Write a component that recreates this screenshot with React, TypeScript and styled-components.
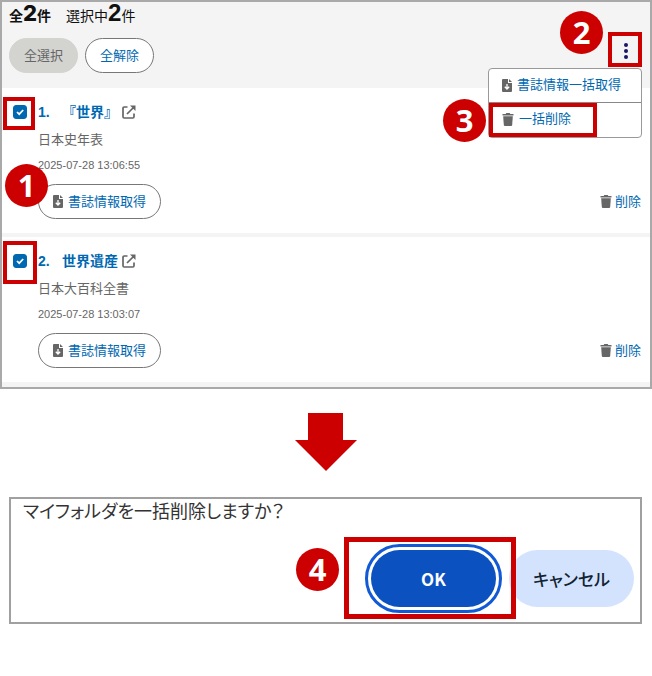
import React from "react";
import styled, { createGlobalStyle } from "styled-components";

const GlobalStyle = createGlobalStyle`
  *, *::before, *::after { box-sizing: border-box; }
  body {
    margin: 0;
    background: #fff;
    color: #666;
    font-family: "Liberation Sans", "Noto Sans CJK JP", sans-serif;
    font-size: 13px;
    line-height: 20px;
  }
  button, input { font: inherit; margin: 0; }
  h2, p, ul { margin: 0; padding: 0; }
`;

const BLUE = "#0068b1";
const RED = "#cc0000";

const Page = styled.main`
  display: flex;
  flex-direction: column;
`;

const FolderPanel = styled.section`
  padding-bottom: 1px;
  border: 2px solid #a9a9a9;
  background: #f4f4f4;
`;

const FolderHeader = styled.header`
  position: relative;
  display: flex;
  flex-direction: column;
  gap: 10px;
  padding: 0 8px 15px 7px;
  background: #f4f4f4;
`;

const Counts = styled.p`
  display: flex;
  align-items: baseline;
  gap: 15px;
  height: 26px;
  color: #111;
  font-size: 14px;
  line-height: 26px;
`;

const Count = styled.span<{ $bold?: boolean }>`
  font-weight: ${(p) => (p.$bold ? 700 : 400)};
`;

const CountNumber = styled.strong<{ $heavy?: boolean }>`
  font-size: ${(p) => (p.$heavy ? 22 : 24)}px;
  line-height: 22px;
  font-weight: ${(p) => (p.$heavy ? 800 : 700)};
  ${(p) => p.$heavy && "font-family: Inter, sans-serif;"}
`;

const Toolbar = styled.div`
  display: flex;
  align-items: center;
  gap: 7px;
`;

const PillButton = styled.button<{ $muted?: boolean }>`
  display: inline-flex;
  align-items: center;
  gap: 5px;
  height: 35px;
  padding: 0 14px;
  border: 1px solid ${(p) => (p.$muted ? "#d3d3d0" : "#777")};
  border-radius: 18px;
  background: ${(p) => (p.$muted ? "#d3d3d0" : "#fff")};
  color: ${(p) => (p.$muted ? "#666" : BLUE)};
  white-space: nowrap;
`;

const MenuAnchor = styled.div`
  position: absolute;
  top: 30px;
  right: 8px;
  z-index: 2;
`;

const KebabButton = styled.button`
  display: grid;
  place-items: center;
  width: 34px;
  height: 35px;
  margin-left: auto;
  padding: 2px 0 0 2px;
  border: 0;
  background: transparent;
`;

const Menu = styled.ul`
  width: 154px;
  margin-top: 1px;
  padding-bottom: 1px;
  border: 1px solid #999;
  border-radius: 4px;
  background: #fff;
  list-style: none;
`;

const MenuItem = styled.li`
  position: relative;
  & + & { border-top: 1px solid #888; }
`;

const MenuButton = styled.button`
  display: flex;
  align-items: center;
  gap: 5px;
  width: 100%;
  height: 33px;
  padding: 0 13px 1px;
  border: 0;
  background: transparent;
  color: ${BLUE};
  white-space: nowrap;
`;

const Highlight = styled.span<{ $top: number; $left: number; $w: number; $h: number; $line?: number }>`
  position: absolute;
  top: ${(p) => p.$top}px;
  left: ${(p) => p.$left}px;
  width: ${(p) => p.$w}px;
  height: ${(p) => p.$h}px;
  border: ${(p) => p.$line ?? 4}px solid ${RED};
  pointer-events: none;
`;

const Badge = styled.span<{ $top: number; $left: number }>`
  position: absolute;
  z-index: 3;
  top: ${(p) => p.$top}px;
  left: ${(p) => p.$left}px;
  display: grid;
  place-items: center;
  width: 43px;
  height: 43px;
  padding-bottom: 2px;
  border-radius: 50%;
  background: ${RED};
  color: #fff;
  font: 700 31px/40px "Noto Sans", sans-serif;
  pointer-events: none;
`;

const Entry = styled.article`
  position: relative;
  display: grid;
  grid-template-columns: 14px 1fr;
  column-gap: 11px;
  padding: 14px 9px 14px 11px;
  border-bottom: 4px solid #f4f4f4;
  background: #fff;
`;

const CheckLabel = styled.label`
  display: grid;
  align-content: center;
  height: 20px;

  svg {
    grid-area: 1 / 1;
    place-self: center;
    pointer-events: none;
  }
`;

const CheckInput = styled.input`
  grid-area: 1 / 1;
  appearance: none;
  width: 14px;
  height: 14px;
  border: 1px solid ${BLUE};
  border-radius: 3px;
  background: #fff;

  &:checked { background: ${BLUE}; }
`;

const EntryBody = styled.div`
  display: flex;
  flex-direction: column;
`;

const EntryTitle = styled.h2`
  display: flex;
  align-items: center;
  color: ${BLUE};
  font-size: 14px;
  line-height: 20px;
`;

const EntryNumber = styled.span`
  width: 24px;
`;

const TitleLink = styled.a`
  display: flex;
  align-items: center;
  gap: 4px;
  color: inherit;
  text-decoration: none;
`;

const Source = styled.p`
  margin-top: 8px;
`;

const Stamp = styled.time`
  margin-top: 5px;
  font-size: 11px;
`;

const EntryActions = styled.div`
  display: flex;
  align-items: center;
  justify-content: space-between;
  margin-top: 9px;
`;

const DeleteButton = styled.button`
  display: inline-flex;
  align-items: center;
  gap: 3px;
  padding: 0;
  border: 0;
  background: transparent;
  color: ${BLUE};
`;

const ArrowWrap = styled.div`
  display: flex;
  justify-content: center;
  padding: 24px 0 26px;
`;

const Dialog = styled.section`
  display: flex;
  flex-direction: column;
  margin: 0 10px 0 9px;
  padding: 0 6px 15px 12px;
  border: 2px solid #a0a0a0;
  color: #333;
  font-feature-settings: "palt";
`;

const DialogText = styled.p`
  font-size: 18px;
  line-height: 26px;
`;

const DialogActions = styled.div`
  position: relative;
  display: flex;
  align-self: flex-end;
  gap: 13px;
  margin-top: 25px;
`;

const DialogButton = styled.button<{ $primary?: boolean }>`
  width: 125px;
  height: 57px;
  padding: 0;
  border: 0;
  border-radius: 29px;
  background: ${(p) => (p.$primary ? "#0b51bf" : "#d3e3fd")};
  color: ${(p) => (p.$primary ? "#fff" : "#112233")};
  font: 500 17px/24px "Noto Sans CJK JP", sans-serif;
  font-feature-settings: "palt";
  ${(p) => p.$primary && "outline: 3px solid #1259d6; outline-offset: 3px; font-weight: 700;"}
`;

const ExternalIcon = () => (
  <svg width="14" height="14" viewBox="0 0 14 14" fill="none" stroke="#666" strokeWidth="1.700" aria-hidden="true">
    <path d="M5.500 2H2.200Q1 2 1 3.200V11.800Q1 13 2.200 13H10.800Q12 13 12 11.800V8.500" />
    <path d="M5 9L12 2" />
    <path d="M8 0.500H13.500V6L11.500 4L10 2.500Z" fill="#666" stroke="none" />
  </svg>
);

const FileIcon = () => (
  <svg width="10" height="13" viewBox="0 0 10 13" aria-hidden="true">
    <path d="M1 0H6V4H10V12Q10 13 9 13H1Q0 13 0 12V1Q0 0 1 0Z" fill="#666" />
    <path d="M7 0L10 3H7Z" fill="#666" />
    <path d="M5 5V9M2.800 7.700L5 10L7.200 7.700" fill="none" stroke="#fff" strokeWidth="1.300" />
  </svg>
);

const TrashIcon = () => (
  <svg width="12" height="13" viewBox="0 0 12 13" fill="#666" aria-hidden="true">
    <path d="M0.500 1H3.700L4.300 0H7.700L8.300 1H11.500V2.500H0.500Z" />
    <path d="M1.200 3.300H10.800L10.200 12Q10.100 13 9.100 13H2.900Q1.900 13 1.800 12Z" />
  </svg>
);

const CheckMark = () => (
  <svg width="8" height="8" viewBox="0 0 8 8" fill="none" stroke="#fff" strokeWidth="1.700" aria-hidden="true">
    <path d="M1 4L3.200 6.200L7.200 2" />
  </svg>
);

type EntryData = { id: number; title: string; source: string; stamp: string; frame: [number, number, number, number] };

const entries: EntryData[] = [
  { id: 1, title: "『世界』", source: "日本史年表", stamp: "2025-07-28 13:06:55", frame: [9, 1, 32, 33] },
  { id: 2, title: "世界遺産", source: "日本大百科全書", stamp: "2025-07-28 13:03:07", frame: [4, 1, 34, 43] },
];

const FolderEntry = ({ entry }: { entry: EntryData }) => {
  const [top, left, w, h] = entry.frame;
  return (
    <Entry>
      <CheckLabel>
        <CheckInput type="checkbox" defaultChecked aria-label={entry.title} />
        <CheckMark />
      </CheckLabel>
      <EntryBody>
        <EntryTitle>
          <EntryNumber>{entry.id}.</EntryNumber>
          <TitleLink href="#">
            {entry.title}
            <ExternalIcon />
          </TitleLink>
        </EntryTitle>
        <Source>{entry.source}</Source>
        <Stamp>{entry.stamp}</Stamp>
        <EntryActions>
          <PillButton type="button">
            <FileIcon />
            書誌情報取得
          </PillButton>
          <DeleteButton type="button">
            <TrashIcon />
            削除
          </DeleteButton>
        </EntryActions>
      </EntryBody>
      <Highlight $top={top} $left={left} $w={w} $h={h} />
      {entry.id === 1 && <Badge $top={76} $left={3}>1</Badge>}
    </Entry>
  );
};

export default function App() {
  return (
    <Page>
      <GlobalStyle />
      <FolderPanel>
        <FolderHeader>
          <Counts>
            <Count $bold>全<CountNumber $heavy>2</CountNumber>件</Count>
            <Count>選択中<CountNumber>2</CountNumber>件</Count>
          </Counts>
          <Toolbar>
            <PillButton type="button" $muted>全選択</PillButton>
            <PillButton type="button">全解除</PillButton>
          </Toolbar>
          <MenuAnchor>
            <KebabButton type="button" aria-label="メニュー">
              <svg width="6" height="18" viewBox="0 0 6 18" fill="#1c1464" aria-hidden="true">
                <circle cx="3" cy="3" r="2" />
                <circle cx="3" cy="9" r="2" />
                <circle cx="3" cy="15" r="2" />
              </svg>
            </KebabButton>
            <Menu>
              <MenuItem>
                <MenuButton type="button">
                  <FileIcon />
                  書誌情報一括取得
                </MenuButton>
              </MenuItem>
              <MenuItem>
                <MenuButton type="button">
                  <TrashIcon />
                  一括削除
                </MenuButton>
                <Highlight $top={0} $left={0} $w={108} $h={34} />
                <Badge $top={-4} $left={-46}>3</Badge>
              </MenuItem>
            </Menu>
            <Highlight $top={0} $left={120} $w={34} $h={35} />
            <Badge $top={-21} $left={72}>2</Badge>
          </MenuAnchor>
        </FolderHeader>
        {entries.map((entry) => (
          <FolderEntry key={entry.id} entry={entry} />
        ))}
      </FolderPanel>
      <ArrowWrap>
        <svg width="62" height="58" viewBox="0 0 62 58" fill={RED} aria-hidden="true">
          <path d="M13 0H48V27H62L31 58L0 27H13Z" />
        </svg>
      </ArrowWrap>
      <Dialog role="dialog" aria-labelledby="confirm-text">
        <DialogText id="confirm-text">マイフォルダを一括削除しますか？</DialogText>
        <DialogActions>
          <DialogButton type="button" $primary>OK</DialogButton>
          <DialogButton type="button">キャンセル</DialogButton>
          <Highlight $top={-13} $left={-27} $w={172} $h={82} $line={5} />
          <Badge $top={-2} $left={-75}>4</Badge>
        </DialogActions>
      </Dialog>
    </Page>
  );
}
